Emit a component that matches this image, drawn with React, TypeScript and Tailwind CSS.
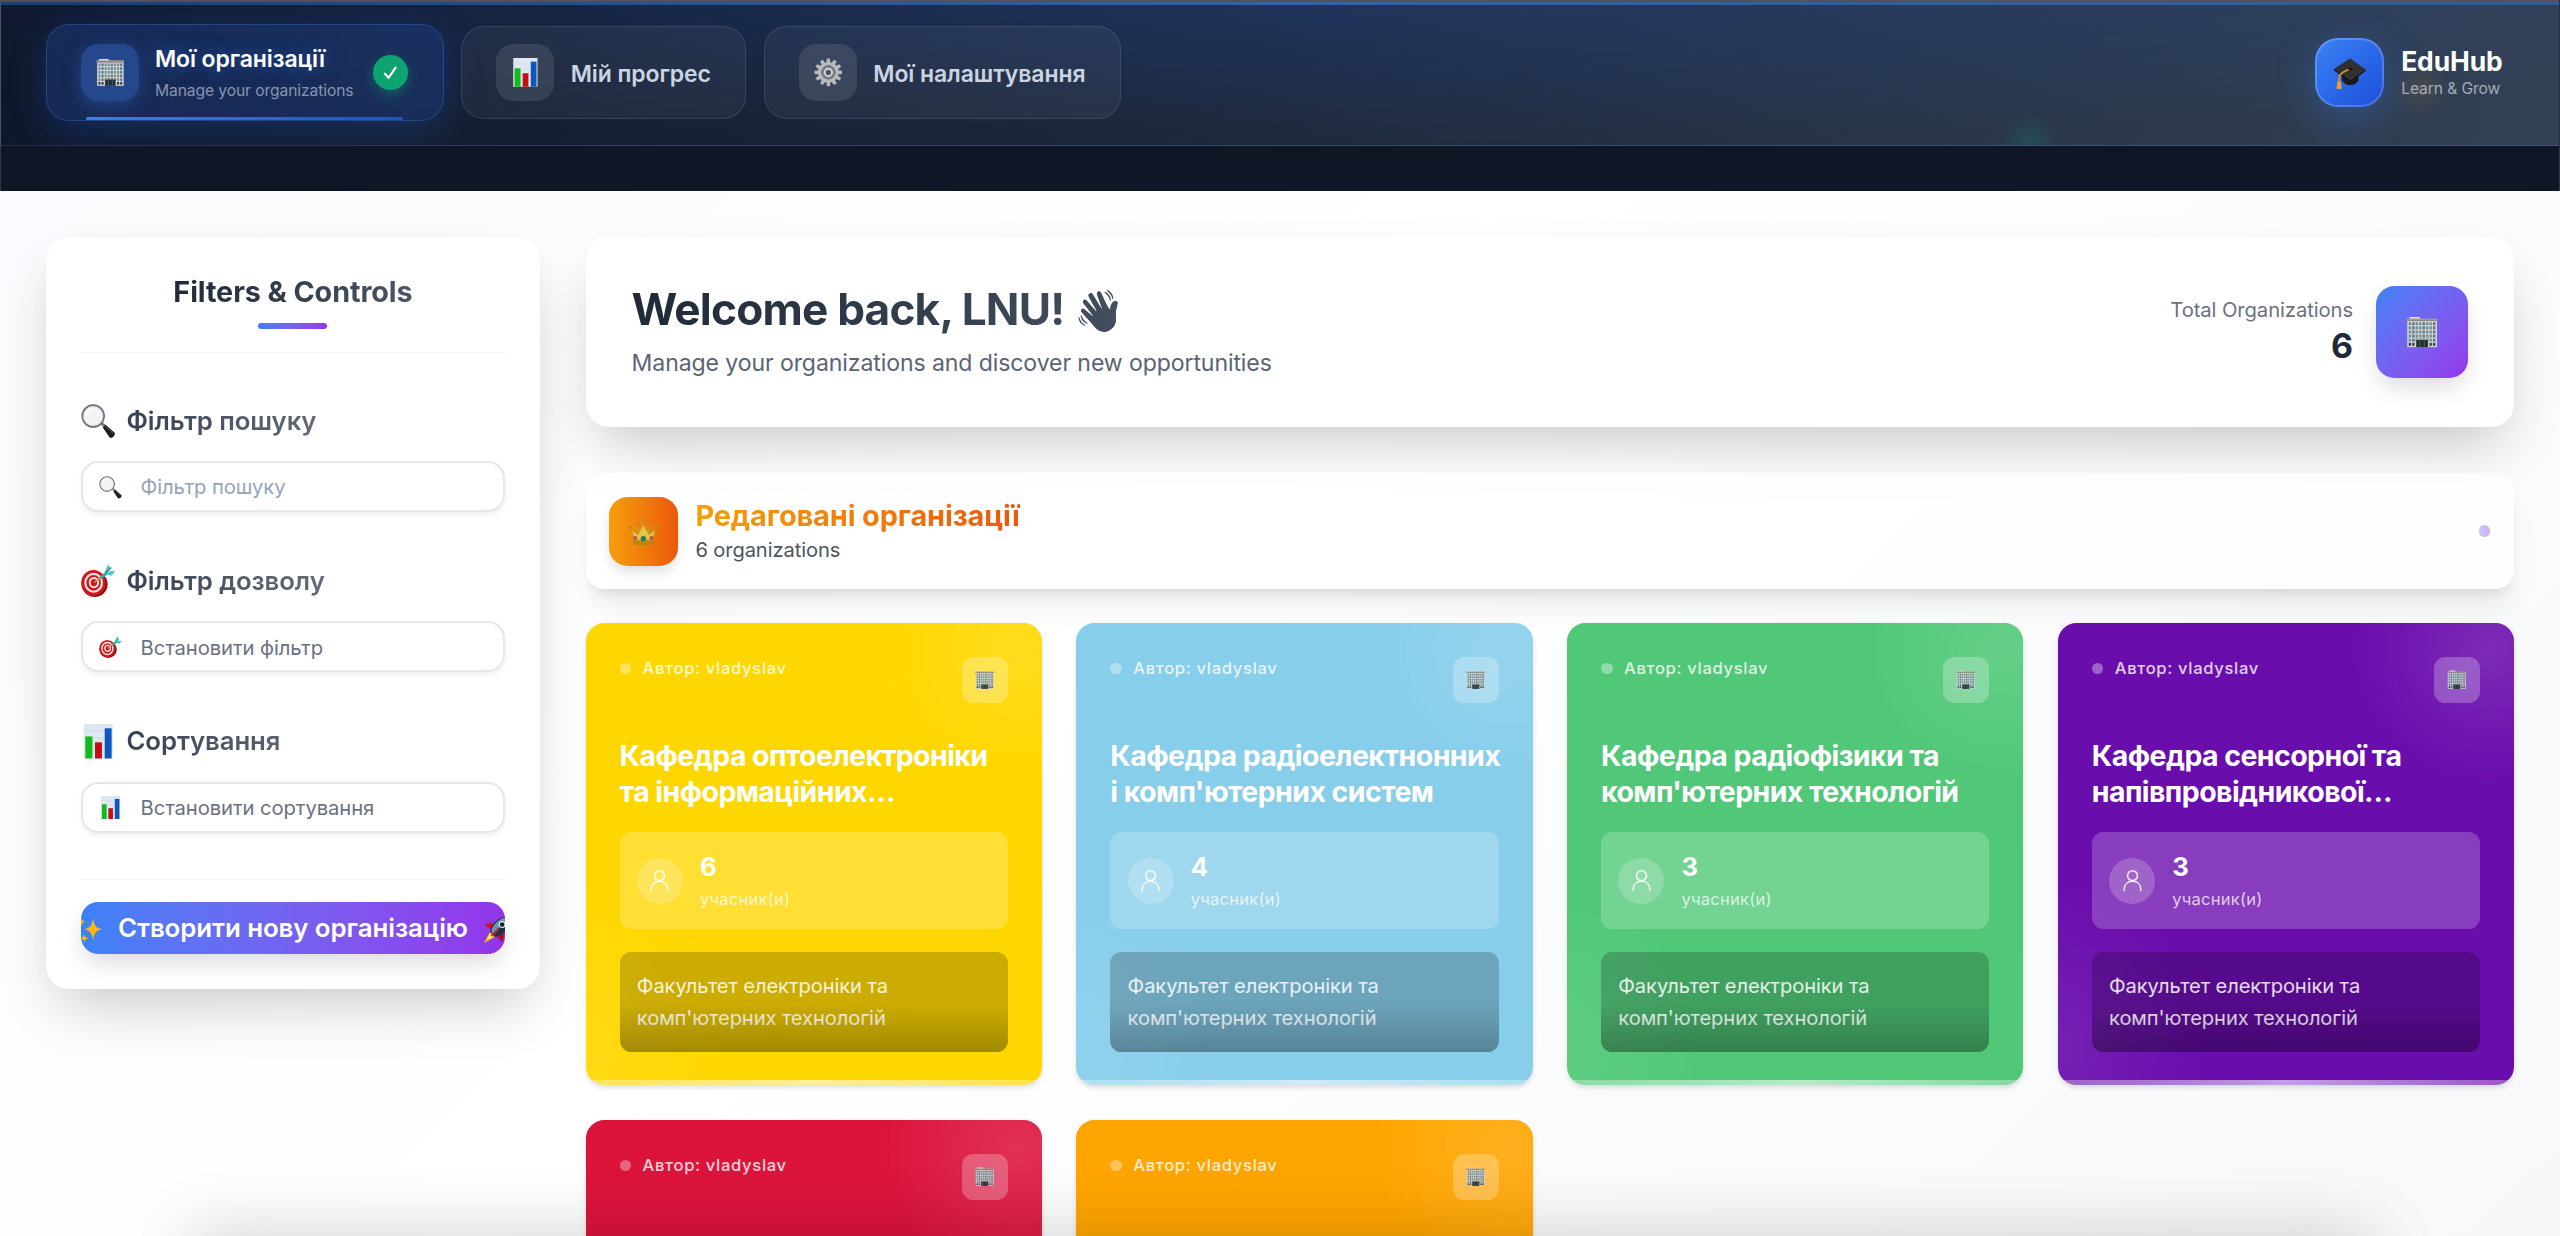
import React from "react";

type IconProps = { className?: string };

function Building({ className }: IconProps) {
  const cols = [0, 1, 2, 3, 4, 5, 6, 7];
  const rows = [0, 1, 2, 3, 4];
  return (
    <svg viewBox="0 0 32 32" className={className}>
      <path d="M3.5 1.2h10.5v3H3.5z" fill="#d9d3c6" />
      <path d="M3.5 1.2h10.5v.8H3.5z" fill="#f1ece0" />
      <path d="M.6 2.8h30.8v2.4H.6z" fill="#8d8478" />
      <path d="M.6 2.8h30.8v.7H.6z" fill="#bdb4a4" />
      <path d="M1.2 5h29.6v26H1.2z" fill="#cfd3d0" />
      {rows.map((r) =>
        cols.map((c) => (
          <rect key={`${r}-${c}`} x={2.7 + c * 3.45} y={6.2 + r * 4.1} width="2.3" height="2.9" fill={c % 3 === 1 ? "#577686" : "#6f8d9a"} />
        ))
      )}
      {[2.7, 6.15, 23.4, 26.85].map((x) => (
        <rect key={x} x={x} y="26.7" width="2.3" height="2.9" fill="#2f3f49" />
      ))}
      <path d="M9.6 22.4h12.8V24H9.6z" fill="#a39a86" />
      <path d="M10.2 24h11.6v7H10.2z" fill="#1f2d36" />
      <path d="M13.8 24.6v6.4M18.2 24.6v6.4" stroke="#5f7681" strokeWidth=".7" />
    </svg>
  );
}

function BarChart({ className }: IconProps) {
  return (
    <svg viewBox="0 0 32 32" className={className}>
      <rect x="2.5" y="0" width="27" height="32" fill="#dfe7f0" />
      <path d="M2.5 6.4h27M2.5 12.8h27M2.5 19.2h27M2.5 25.6h27" stroke="#c9d5e2" strokeWidth=".6" />
      <rect x="4" y="11.5" width="6.6" height="20.5" fill="#12bb1c" />
      <rect x="13" y="17" width="6.4" height="15" fill="#c50d14" />
      <rect x="22" y="4" width="6.4" height="28" fill="#0d57bd" />
    </svg>
  );
}

function Gear({ className }: IconProps) {
  const teeth = Array.from({ length: 12 }, (_, i) => i * 30);
  return (
    <svg viewBox="0 0 32 32" className={className}>
      {teeth.map((a) => (
        <path key={a} d="M13.6 6 14.3.6h3.4l.7 5.400z" fill="#b6b9bc" transform={`rotate(${a} 16 16)`} />
      ))}
      <circle cx="16" cy="16" r="9.6" fill="none" stroke="#b9bcbf" strokeWidth="3.6" />
      <circle cx="16" cy="16" r="8" fill="#84888b" />
      <circle cx="16" cy="16" r="4" fill="#4f5356" stroke="#d3d6d8" strokeWidth="2.200" />
      <circle cx="16" cy="16" r="6.600" fill="none" stroke="#6a6e71" strokeWidth="1" />
    </svg>
  );
}

function GradCap({ className }: IconProps) {
  return (
    <svg viewBox="0 0 32 32" className={className}>
      <path d="M8.5 14v9.5c2 3 5.2 4.5 8 4.5 3.400 0 7-2.500 8-4.500V13z" fill="#1b1b1c" />
      <path d="M16.300 2.500 31.500 13 16.800 24 .8 12.500z" fill="#303032" />
      <path d="m.8 12.500 16 11.500L31.500 13v1.200L16.800 25.400.8 13.700z" fill="#101011" />
      <path d="M16.400 12.600c-5 1.600-9.500 3.400-10.300 7.400l-.3 5" fill="none" stroke="#d58c24" strokeWidth="1.900" />
      <path d="m4.300 24.200 3.200.3.700 6.600-1.800.7-3.100-.4z" fill="#e5a034" />
      <ellipse cx="16.500" cy="12.500" rx="1.800" ry="1.200" fill="#111" />
    </svg>
  );
}

function Magnifier({ className }: IconProps) {
  return (
    <svg viewBox="0 0 32 32" className={className}>
      <path d="m18.200 19 2-2 3 2.600-2 2.200z" fill="#777b80" />
      <path d="m20.200 21.800 2.500-2.600 8.300 7.200c1 1-.1 3.100-1 4-1 .9-2.600 1.500-3.600.5z" fill="#1c1c1e" />
      <path d="m22.300 20.700 7.300 6.300" stroke="#5b5e62" strokeWidth=".9" />
      <circle cx="11.300" cy="11.200" r="10.100" fill="#f1f3f5" stroke="#6d7177" strokeWidth="1.600" />
      <circle cx="11.300" cy="11.200" r="9" fill="none" stroke="#c8cdd3" strokeWidth=".7" />
      <path d="M5 10c.6-3 2.800-4.900 5.500-5.200" stroke="#fff" strokeWidth="1.600" fill="none" strokeLinecap="round" />
    </svg>
  );
}

function Target({ className }: IconProps) {
  return (
    <svg viewBox="0 0 32 32" className={className}>
      <ellipse cx="12.700" cy="18.700" rx="12" ry="11.800" fill="#8e0e12" />
      <ellipse cx="11.500" cy="17.600" rx="11.300" ry="12" fill="#d4161c" />
      <ellipse cx="11.700" cy="17.400" rx="7.700" ry="8.300" fill="none" stroke="#f6e9e6" strokeWidth="2" />
      <ellipse cx="12" cy="17.200" rx="3.900" ry="4.300" fill="none" stroke="#f6e9e6" strokeWidth="1.800" />
      <path d="M12.500 17 24 7.600" stroke="#d9a13a" strokeWidth="1.500" />
      <path d="m16.800 12.600 6.800-6.200 2 2.400-7.400 5.600z" fill="#38aaa8" />
      <path d="M22 7.800 25 .3l2.300 3.400L25.600 7.500zM23.200 9.400l4-3 4.600.4-3.700 4z" fill="#52c5c1" />
      <path d="m22.500 8.200 5.700-4.900" stroke="#2c8f8e" strokeWidth="1.200" />
    </svg>
  );
}

function Crown({ className }: IconProps) {
  return (
    <svg viewBox="0 0 32 32" className={className}>
      <path d="M4.800 26 1.200 11l7.500 5L10 6l4 8.500L16 3l2.100 11.500L22 6l1.300 10 7.500-5-3.600 15z" fill="#c79a1a" />
      <path d="M6.200 24 4 14.500l5.800 4.800L16 8l6.200 11.300 5.800-4.800L25.800 24z" fill="#e9cd4c" />
      <path d="M4.500 23.800c7 2.600 16 2.600 23 0v5c-7 2.400-16 2.400-23 0z" fill="#b8870f" />
      <circle cx="16" cy="23" r="3" fill="#12805e" />
      <circle cx="7" cy="22.300" r="2.200" fill="#c33f72" />
      <circle cx="25" cy="22.300" r="2.200" fill="#c33f72" />
      <circle cx="1.800" cy="10.600" r="1.500" fill="#7e9a2c" />
      <circle cx="30.200" cy="10.600" r="1.500" fill="#7e9a2c" />
      <circle cx="10" cy="5.800" r="1.400" fill="#a98b1c" />
      <circle cx="22" cy="5.800" r="1.400" fill="#a98b1c" />
      <circle cx="16" cy="3" r="1.600" fill="#b3951e" />
    </svg>
  );
}

function Sparkles({ className }: IconProps) {
  return (
    <svg viewBox="0 0 32 32" className={className}>
      <g fill="#fdb512">
        <path d="M21.500 4c1 7.500 2.700 11 10 12.300-7.300 1.300-9 4.900-10 12.300-1-7.400-2.700-11-10-12.300C18.800 15 20.500 11.500 21.500 4z" />
        <path d="M8.500 2.500c.6 3.600 1.500 5 5 5.700-3.500.7-4.400 2.100-5 5.700-.6-3.600-1.500-5-5-5.700 3.500-.7 4.400-2.100 5-5.700z" />
        <path d="M12 21c.5 3.300 1.300 4.500 4.500 5.100-3.200.6-4 1.900-4.500 5.100-.5-3.200-1.300-4.500-4.500-5.100 3.200-.6 4-1.800 4.500-5.100z" />
      </g>
    </svg>
  );
}

function Rocket({ className }: IconProps) {
  return (
    <svg viewBox="0 0 32 32" className={className}>
      <path d="M2 11.500c3-2.300 8.500-2 11-.8L8.500 17z" fill="#d01520" />
      <path d="M20.500 30c2.300-3 2-8.500.8-11L15 23.500z" fill="#b00e1a" />
      <path d="M7.500 19 .8 31.200 13 24.500z" fill="#f6a81c" />
      <path d="M7.500 21 3.500 28.500 11 24.500z" fill="#fdf06a" />
      <path d="M7.500 19c2-9.500 10-16.500 23.500-18C29.500 14.500 22.500 22.500 13 24.500z" fill="#1f3346" />
      <path d="M8.800 17.500C11.800 9.500 19 3.600 31 1 24 8 17 14.500 10.200 21.700z" fill="#6c93b0" />
      <path d="M24.600 2.500C27 1.600 29 1.200 31 1c-.2 2-.6 4.200-1.400 6.500z" fill="#c6202b" />
      <circle cx="20.500" cy="11.300" r="3.100" fill="#0f2233" stroke="#dfe8ee" strokeWidth="1.200" />
      <path d="m9 23.500 7.500-7.500" stroke="#c6202b" strokeWidth="2.200" />
    </svg>
  );
}

function User({ className }: IconProps) {
  return (
    <svg viewBox="0 0 20 20" className={className} fill="none" stroke="currentColor" strokeWidth="1.400" strokeLinecap="round">
      <circle cx="10" cy="5.800" r="4.300" />
      <path d="M2.800 18.600v-.9c0-4.300 3-7 7.200-7s7.200 2.700 7.200 7v.9" />
    </svg>
  );
}

type NavItemProps = { icon: React.ReactNode; label: string };

function NavItem({ icon, label }: NavItemProps) {
  return (
    <div className="flex h-[81px] items-center gap-[14.500px] rounded-[20px] border border-white/10 bg-white/5 px-[30px]">
      <div className="flex size-[50px] items-center justify-center rounded-[15px] bg-white/10">{icon}</div>
      <span className="pt-[2px] text-[20px] leading-[28px] font-semibold whitespace-nowrap text-[#cbd5e1]">{label}</span>
    </div>
  );
}

function Header() {
  return (
    <header className="relative h-[127px] overflow-hidden border-x border-b border-white/10 bg-[radial-gradient(ellipse_60%_110%_at_52%_-10%,rgba(37,99,235,0.2),transparent_100%),linear-gradient(100deg,#0f172a_0%,#1e293b_50%,#334155_100%)]">
      <div className="absolute inset-x-0 top-0 h-[1.800px] bg-[#57524f]" />
      <div className="absolute inset-x-0 top-[1.800px] h-[2.400px] bg-[linear-gradient(90deg,#1f3c70,#3263ac_50%,#345a93)]" />
      <div className="absolute top-[98px] left-[1738px] size-[52px] rounded-full bg-[radial-gradient(circle,rgba(16,185,129,0.17),transparent_70%)]" />
      <div className="absolute top-[52px] left-[2078px] size-[50px] rounded-full bg-[radial-gradient(circle,rgba(245,158,11,0.12),transparent_70%)]" />
      <div className="relative flex h-full items-center justify-between pr-[49px] pl-[39px]">
        <nav className="flex items-center gap-[15px]">
          <div className="relative flex h-[84px] w-[346px] items-center gap-[14px] rounded-[20px] border border-[#3b82f6]/30 bg-[#1e408a]/45 pr-[29px] pl-[30px] shadow-[0_8px_32px_rgba(37,99,235,0.28)]">
            <div className="flex size-[50px] shrink-0 items-center justify-center rounded-[15px] bg-[#25488c] shadow-[0_4px_16px_rgba(59,130,246,0.3)]">
              <Building className="h-[25px] w-[25px]" />
            </div>
            <div className="flex w-[176px] flex-col gap-[4px] pt-[2px] whitespace-nowrap">
              <span className="text-[20px] leading-[26px] font-semibold text-white [text-shadow:0_0_16px_rgba(59,130,246,0.5)]">Мої організації</span>
              <span className="text-[13.600px] leading-[20px] text-[#8795b3]">Manage your organizations</span>
            </div>
            <div className="flex size-[30px] shrink-0 items-center justify-center rounded-full bg-[#0ea371] shadow-[0_4px_12px_rgba(16,185,129,0.35)]">
              <svg viewBox="0 0 14 14" className="size-[13px]" fill="none" stroke="white" strokeWidth="2" strokeLinecap="round" strokeLinejoin="round">
                <path d="m1.800 8.200 3.400 3.800 6.600-9.600" />
              </svg>
            </div>
            <div className="absolute bottom-[-0.500px] left-[34px] h-[3px] w-[276px] rounded-[2px] bg-linear-to-r from-[#3f7df0] to-[#2250cc]" />
          </div>
          <NavItem icon={<BarChart className="size-[25px]" />} label="Мій прогрес" />
          <NavItem icon={<Gear className="size-[25px]" />} label="Мої налаштування" />
        </nav>
        <div className="flex items-center gap-[15px]">
          <div className="flex size-[60px] items-center justify-center rounded-[20px] border-2 border-white/20 bg-linear-to-br from-[#3b82f6] to-[#1d4ed8] bg-origin-border shadow-[0_8px_32px_rgba(59,130,246,0.35)]">
            <GradCap className="size-[29px]" />
          </div>
          <div className="flex flex-col gap-px whitespace-nowrap">
            <span className="text-[23px] leading-[28px] font-bold text-white">EduHub</span>
            <span className="text-[13.600px] leading-[18px] text-[#a3adbb]">Learn &amp; Grow</span>
          </div>
        </div>
      </div>
    </header>
  );
}

type FilterProps = { icon: (p: IconProps) => React.ReactNode; title: string; text: string; muted?: boolean };

function FilterGroup({ icon: Icon, title, text, muted }: FilterProps) {
  return (
    <section>
      <h3 className="flex h-[30px] items-center gap-[9.500px] pt-[2.500px]">
        <Icon className="size-[30px]" />
        <span className="flex-1 bg-[linear-gradient(90deg,#374151,#6b7280_60%)] bg-clip-text text-[22.400px] leading-[30px] font-semibold text-transparent">{title}</span>
      </h3>
      <div className="mt-[21px] flex h-[44.500px] items-center gap-[16.500px] rounded-[15px] border-2 border-[#e5e7eb] bg-white pt-[1px] pl-[13.500px] shadow-[0_2px_4px_rgba(0,0,0,0.06)]">
        <Icon className="size-[20px]" />
        <span className={muted ? "pt-px text-[17.600px] text-[#94a3b8]" : "pt-px text-[17.600px] text-[#6b7280]"}>{text}</span>
      </div>
    </section>
  );
}

function Sidebar() {
  return (
    <aside className="flex h-[654px] w-[429.500px] shrink-0 flex-col rounded-[20px] bg-white px-[30.500px] pt-[33px] shadow-[0_25px_50px_-12px_rgba(0,0,0,0.2),0_0_24px_rgba(0,0,0,0.02)]">
      <div className="flex flex-col items-center border-b border-[#f1f2f4] pb-[20px]">
        <h2 className="bg-linear-to-r from-[#1f2937] to-[#4b5563] bg-clip-text text-[25px] leading-[29px] font-bold text-transparent">Filters &amp; Controls</h2>
        <div className="mt-[13px] h-[5px] w-[60px] rounded-full bg-linear-to-r from-[#3b82f6] to-[#9333ea]" />
      </div>
      <div className="mt-[43px] flex flex-col gap-[43.900px]">
        <FilterGroup icon={Magnifier} title="Фільтр пошуку" text="Фільтр пошуку" muted />
        <FilterGroup icon={Target} title="Фільтр дозволу" text="Встановити фільтр" />
        <FilterGroup icon={BarChart} title="Сортування" text="Встановити сортування" />
      </div>
      <div className="mt-[40px] border-t border-[#f1f2f4] pt-[19.500px]">
        <button className="flex h-[45px] w-full items-center justify-center gap-[13px] overflow-hidden rounded-[15px] bg-linear-to-r from-[#3b82f6] to-[#9333ea] pt-px shadow-[0_10px_20px_-3px_rgba(0,0,0,0.15)]">
          <Sparkles className="size-[26px] shrink-0" />
          <span className="text-[22.500px] leading-[30px] font-semibold whitespace-nowrap text-white">Створити нову організацію</span>
          <Rocket className="size-[26px] shrink-0" />
        </button>
      </div>
    </aside>
  );
}

function Welcome() {
  return (
    <section className="flex h-[165.300px] items-center justify-between rounded-[20px] bg-white px-[40px] shadow-[0_25px_50px_-12px_rgba(0,0,0,0.21),0_0_24px_rgba(0,0,0,0.015)]">
      <div className="-mt-px flex flex-col items-start gap-[10px]">
        <h1 className="bg-linear-to-r from-[#1f2937] to-[#434e5e] bg-clip-text text-[38.400px] leading-[46px] font-bold tracking-[-0.700px] whitespace-nowrap text-transparent">
          Welcome back, LNU! <span className="text-[35px] leading-none">👋</span>
        </h1>
        <p className="text-[20.050px] leading-[28px] text-[#5b6472]">Manage your organizations and discover new opportunities</p>
      </div>
      <div className="flex items-center gap-[20px]">
        <div className="flex flex-col items-end gap-[3px] pb-px">
          <span className="text-[17.600px] leading-[22px] text-[#6b7280]">Total Organizations</span>
          <span className="text-[29.500px] leading-[35px] font-bold text-[#1f2937]">6</span>
        </div>
        <div className="flex size-[80px] items-center justify-center rounded-[16px] bg-linear-to-br from-[#3b82f6] to-[#9333ea] shadow-[0_10px_20px_-3px_rgba(0,0,0,0.15)]">
          <Building className="size-[28px]" />
        </div>
      </div>
    </section>
  );
}

function SectionHeader() {
  return (
    <section className="mt-[40px] flex h-[101px] items-center gap-[15px] rounded-[16px] bg-white/80 px-[20.500px] shadow-[0_20px_25px_-5px_rgba(0,0,0,0.07),0_8px_10px_-6px_rgba(0,0,0,0.1)]">
      <div className="flex size-[60px] items-center justify-center rounded-[16px] bg-linear-to-r from-[#f59e0b] to-[#ea580c] shadow-[0_6px_12px_-2px_rgba(0,0,0,0.15)]">
        <Crown className="mt-[2px] size-[25px] opacity-90" />
      </div>
      <div className="flex flex-1 flex-col items-start gap-[5px]">
        <h2 className="bg-linear-to-r from-[#f59e0b] to-[#ea580c] bg-clip-text text-[25.100px] leading-[29px] font-bold text-transparent">Редаговані організації</h2>
        <p className="text-[17.500px] leading-[22px] text-[#4b5563]">6 organizations</p>
      </div>
      <div className="size-[10px] rounded-full bg-linear-to-r from-[#c3c6fb] to-[#cdb2f4]" />
    </section>
  );
}

type Org = { color: string; title?: [string, string]; members?: number };

const orgs: Org[] = [
  { color: "bg-[#ffd700]", title: ["Кафедра оптоелектроніки", "та інформаційних…"], members: 6 },
  { color: "bg-[#87ceeb]", title: ["Кафедра радіоелектнонних", "і комп'ютерних систем"], members: 4 },
  { color: "bg-[#50c878]", title: ["Кафедра радіофізики та", "комп'ютерних технологій"], members: 3 },
  { color: "bg-[#6a0dad]", title: ["Кафедра сенсорної та", "напівпровідникової…"], members: 3 },
  { color: "bg-[#dc143c]" },
  { color: "bg-[#ffa500]" },
];

function OrgCard({ org }: { org: Org }) {
  return (
    <article className={`relative h-[402px] overflow-hidden rounded-[16px] px-[29.600px] pt-[29.500px] shadow-[0_2px_5px_rgba(0,0,0,0.12)] ${org.color}`}>
      <div className="absolute inset-0 bg-[radial-gradient(ellipse_30%_28%_at_95%_6%,rgba(255,255,255,0.12),transparent_100%),radial-gradient(ellipse_32%_36%_at_0%_92%,rgba(255,255,255,0.08),transparent_100%)]" />
      <div className="relative">
        <div className="flex items-start justify-between">
          <div className="flex items-center gap-[10px]">
            <span className="size-[10px] rounded-full bg-white/35" />
            <span className="text-[14.400px] leading-[20px] font-medium tracking-[0.600px] text-white/80">Автор: vladyslav</span>
          </div>
          <div className="flex size-[40px] items-center justify-center rounded-[10px] bg-white/25">
            <Building className="size-[17px] opacity-90" />
          </div>
        </div>
        {org.title && (
          <>
            <h3 className="mt-[30.500px] text-[24.800px] leading-[31.200px] font-bold tracking-[-0.500px] whitespace-nowrap text-white">
              {org.title[0]}
              <br />
              {org.title[1]}
            </h3>
            <div className="mt-[19px] flex h-[85px] items-center gap-[15px] rounded-[10px] bg-white/20 px-[15px]">
              <div className="flex size-[40px] items-center justify-center rounded-full bg-white/20 text-white/85">
                <User className="size-[20px]" />
              </div>
              <div className="flex flex-col gap-[5px] pt-px">
                <span className="text-[22.400px] leading-[27px] font-bold text-white">{org.members}</span>
                <span className="text-[14.400px] leading-[20px] tracking-[0.200px] text-white/75">учасник(и)</span>
              </div>
            </div>
            <div className="relative mt-[20px] h-[86.300px] overflow-hidden rounded-[10px] bg-black/20 p-[15px] text-[17.500px] leading-[28.160px] text-white/85">
              Факультет електроніки та
              <br />
              комп'ютерних технологій
              <div className="absolute inset-x-0 bottom-0 h-[42px] bg-linear-to-b from-transparent to-black/20" />
            </div>
          </>
        )}
      </div>
      <div className="absolute inset-x-0 bottom-0 h-[5px] bg-linear-to-r from-white/30 via-white/60 to-white/30" />
    </article>
  );
}

export default function App() {
  return (
    <div className="relative h-[1236px] w-[2560px] overflow-hidden bg-[linear-gradient(135deg,#f8fafd_0%,#ffffff_45%,#f7f8fa_100%)] font-['Inter',sans-serif]">
      <div className="tracking-[-0.005em] [zoom:1.15]">
        <Header />
        <div className="h-[39px] border-x border-white/15 bg-[#0f1726]" />
        <main className="flex items-start gap-[39.700px] p-[40px]">
          <Sidebar />
          <div className="min-w-0 flex-1">
            <Welcome />
            <SectionHeader />
            <div className="mt-[29.500px] grid grid-cols-4 gap-[30px]">
              {orgs.map((org) => (
                <OrgCard key={org.color} org={org} />
              ))}
            </div>
          </div>
        </main>
      </div>
      <div className="pointer-events-none absolute top-full right-[190px] left-[190px] h-[100px] shadow-[0_0_70px_rgba(0,0,0,0.19)]" />
    </div>
  );
}
